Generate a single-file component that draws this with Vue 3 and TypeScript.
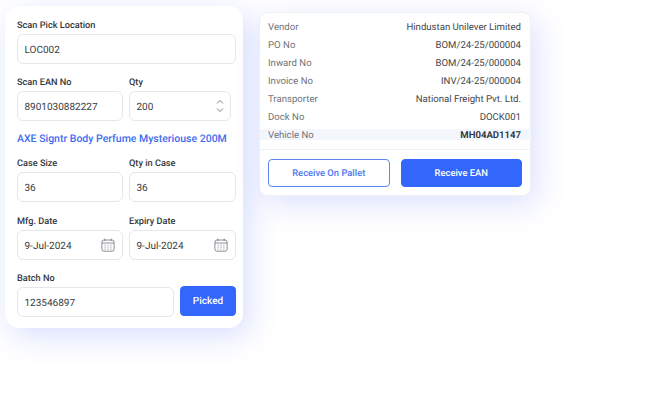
<script setup lang="ts">
const details = [
  { label: 'Vendor', value: 'Hindustan Unilever Limited' },
  { label: 'PO No', value: 'BOM/24-25/000004' },
  { label: 'Inward No', value: 'BOM/24-25/000004' },
  { label: 'Invoice No', value: 'INV/24-25/000004' },
  { label: 'Transporter', value: 'National Freight Pvt. Ltd.' },
  { label: 'Dock No', value: 'DOCK001' },
  { label: 'Vehicle No', value: 'MH04AD1147', active: true },
];
</script>

<template>
  <div class="page">
    <section class="form-card">
      <div class="field">
        <label>Scan Pick Location</label>
        <div class="input">LOC002</div>
      </div>
      <div class="row qty-row">
        <div class="field">
          <label>Scan EAN No</label>
          <div class="input">8901030882227</div>
        </div>
        <div class="field">
          <label>Qty</label>
          <div class="input spaced">
            200
            <svg class="stepper" width="8" height="14" viewBox="0 0 8 14" fill="none" stroke="#6b7078" stroke-width="0.9">
              <path d="M1 4.5 4 1.5 7 4.5" />
              <path d="M1 9.5 4 12.5 7 9.5" />
            </svg>
          </div>
        </div>
      </div>
      <p class="product">AXE Signtr Body Perfume Mysteriouse 200M</p>
      <div class="row">
        <div class="field">
          <label>Case Size</label>
          <div class="input">36</div>
        </div>
        <div class="field">
          <label>Qty in Case</label>
          <div class="input">36</div>
        </div>
      </div>
      <div class="row dates">
        <div class="field" v-for="d in ['Mfg. Date', 'Expiry Date']" :key="d">
          <label>{{ d }}</label>
          <div class="input spaced">
            9-Jul-2024
            <svg class="cal" width="14" height="14" viewBox="0 0 14 14" fill="none" stroke="#6f747b" stroke-width="0.8">
              <rect x="0.9" y="2" width="12.2" height="11.2" rx="2" />
              <path d="M0.9 5h12.2M3.8 0.7v2.3M10.2 0.7v2.3" />
              <path d="M3.6 7.2h1M6.5 7.2h1M9.4 7.2h1M3.6 9.2h1M6.5 9.2h1M9.4 9.2h1M3.6 11.1h1M6.5 11.1h1M9.4 11.1h1" />
            </svg>
          </div>
        </div>
      </div>
      <div class="batch">
        <div class="field grow">
          <label>Batch No</label>
          <div class="input">123546897</div>
        </div>
        <button class="btn primary picked">Picked</button>
      </div>
    </section>

    <section class="info-card">
      <dl class="rows">
        <div v-for="d in details" :key="d.label" class="info-row" :class="{ active: d.active }">
          <dt>{{ d.label }}</dt>
          <dd>{{ d.value }}</dd>
        </div>
      </dl>
      <div class="actions">
        <button class="btn outline">Receive On Pallet</button>
        <button class="btn primary">Receive EAN</button>
      </div>
    </section>
  </div>
</template>

<style>
html, body {
  margin: 0;
  background: #fff;
}
</style>

<style scoped>
.page {
  width: 654px;
  height: 414px;
  box-sizing: border-box;
  padding: 6px 0 0 5px;
  display: flex;
  align-items: flex-start;
  gap: 16px;
  overflow: hidden;
  font-family: Roboto, "Liberation Sans", sans-serif;
  color: #2c2f33;
  text-rendering: geometricPrecision;
}

.form-card {
  width: 238px;
  height: 322px;
  box-sizing: border-box;
  padding: 15px 7px 0 12px;
  background: #fff;
  border-radius: 14px;
  box-shadow: 6px 8px 30px rgba(60, 90, 250, 0.2);
  display: flex;
  flex-direction: column;
}

.field {
  display: flex;
  flex-direction: column;
  min-width: 0;
}

label {
  font-size: 9.2px;
  line-height: 10px;
  font-weight: 500;
  color: #34373b;
  margin-bottom: 3px;
}

.input {
  height: 30px;
  box-sizing: border-box;
  border: 1px solid #e6e7ea;
  border-radius: 6px;
  background: #fff;
  padding: 2px 7px 0 6.5px;
  display: flex;
  align-items: center;
  font-size: 10px;
  color: #3a3d42;
}

.spaced {
  justify-content: space-between;
}

.row {
  display: grid;
  grid-template-columns: 106px 107px;
  gap: 6px;
  margin-top: 14px;
}

.qty-row {
  grid-template-columns: 106px 102px;
}

.product {
  margin: 11px 0 0;
  font-size: 10.5px;
  line-height: 13px;
  font-weight: 500;
  color: #3e6df0;
  white-space: nowrap;
}

.dates {
  margin-top: 15px;
}

.stepper {
  margin: -2px -1px 0 0;
}

.cal {
  margin-top: -2px;
}

.batch {
  display: flex;
  align-items: flex-end;
  gap: 6px;
  margin-top: 14px;
}

.grow {
  flex: 1;
}

.btn {
  border-radius: 4px;
  font-family: inherit;
  font-size: 9.4px;
  font-weight: 500;
  padding: 0;
  cursor: pointer;
  text-rendering: geometricPrecision;
}

.primary {
  background: #3366fb;
  border: 1px solid #3366fb;
  color: #fff;
}

.picked {
  width: 56px;
  height: 30px;
  margin-bottom: 1px;
  padding-top: 1px;
  font-size: 10px;
}

.outline {
  background: #fff;
  border: 1px solid #5d86f5;
  color: #4a78f2;
}

.info-card {
  width: 272px;
  height: 184px;
  margin-top: 6px;
  box-sizing: border-box;
  padding-top: 5px;
  background: #fff;
  border: 1px solid #eef0f3;
  border-radius: 8px;
  box-shadow: 6px 8px 30px rgba(60, 90, 250, 0.18);
}

.rows {
  margin: 0;
  padding-bottom: 9px;
  border-bottom: 1px solid #f0f1f3;
}

.info-row {
  height: 18px;
  padding: 0 9px 0 8px;
  display: flex;
  justify-content: space-between;
  align-items: center;
  font-size: 9.6px;
}

.info-row.active {
  height: 11px;
  margin: 3px -1px 0 0;
  padding-right: 10px;
  padding-top: 1px;
  box-sizing: border-box;
  background: #f4f6fe;
}

dt {
  color: #6f7276;
}

dd {
  margin: 0;
  color: #43464a;
}

.active dd {
  font-weight: 600;
  color: #2c2f33;
}

.actions {
  display: flex;
  gap: 11px;
  padding: 9px 8px 0;
}

.actions .btn {
  flex: 1;
  height: 28px;
}
</style>
